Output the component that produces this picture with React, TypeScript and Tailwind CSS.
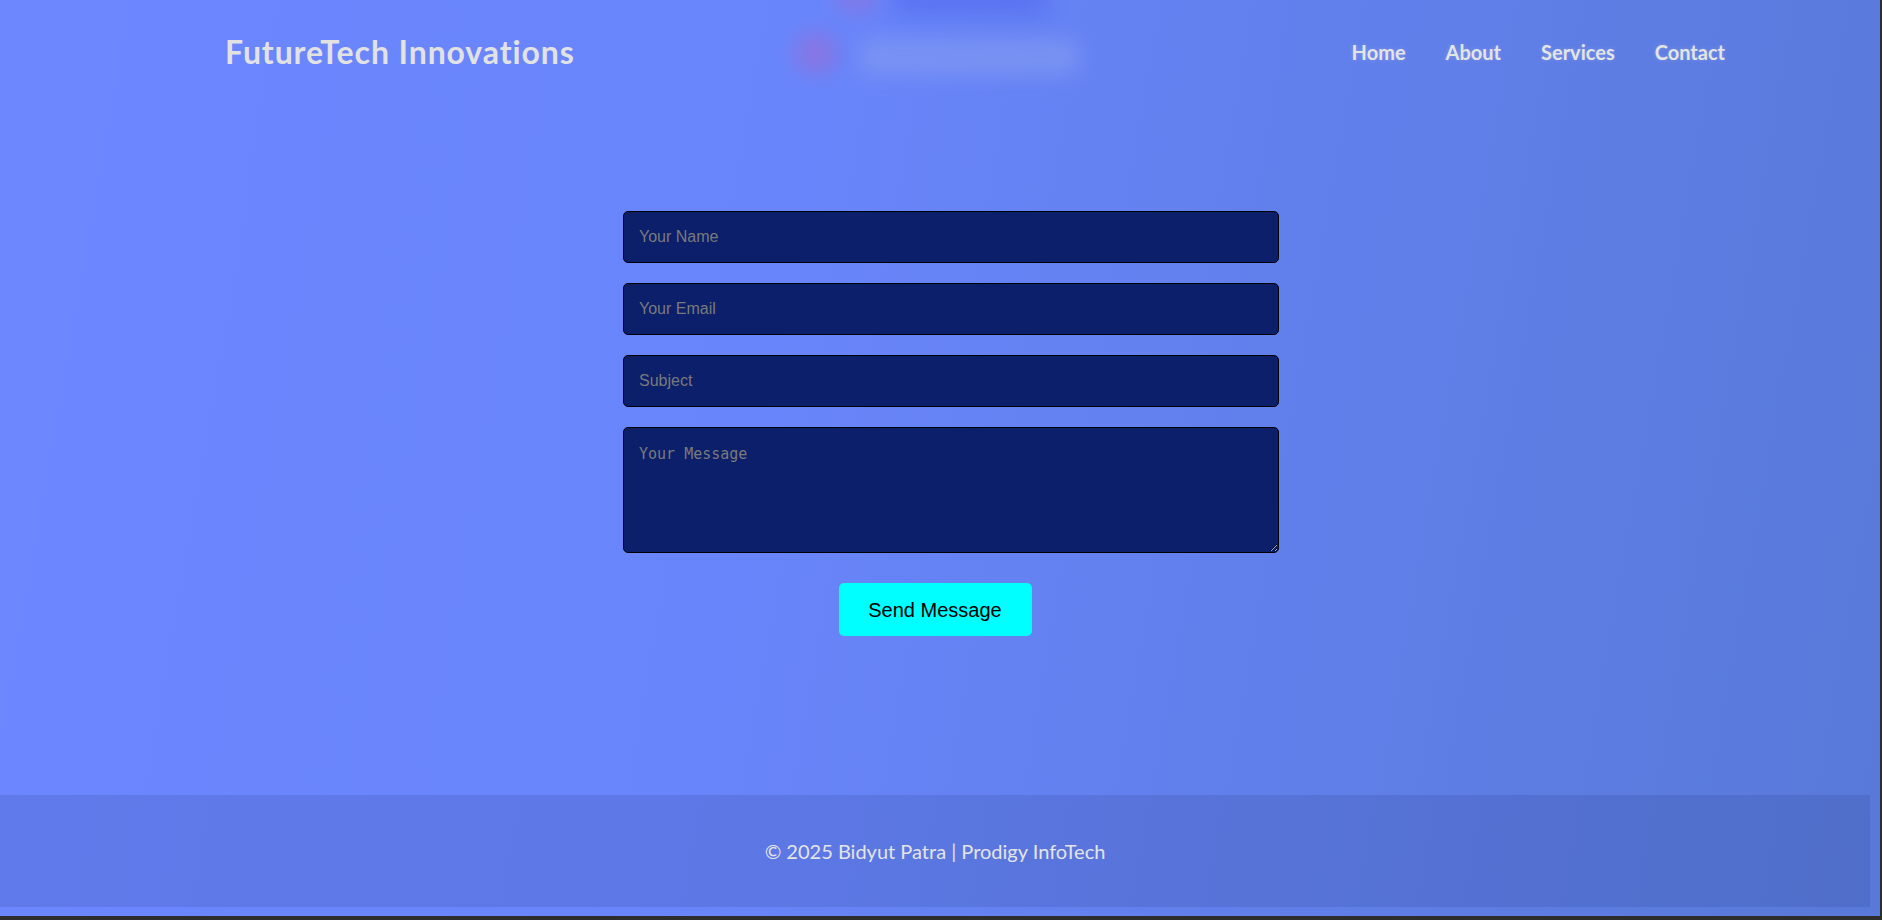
import React from "react";

export default function App() {
  return (
    <div className="w-[1882px] h-[920px] bg-[#2d2d2d] overflow-hidden">
      <div className="relative w-[1880px] h-[916px] overflow-hidden bg-[linear-gradient(100deg,#6c87ff_0%,#6985fb_40%,#5f7ee6_75%,#5879d9_100%)]">
        {/* blurred decorative blobs */}
        <div className="pointer-events-none absolute left-[795px] top-[32px] w-[42px] h-[42px] rounded-full bg-[#a06ad0] opacity-55 blur-[10px]" />
        <div className="pointer-events-none absolute left-[835px] top-[-18px] w-[44px] h-[30px] rounded-full bg-[#a06ad0] opacity-45 blur-[10px]" />
        <div className="pointer-events-none absolute left-[890px] top-[-16px] w-[160px] h-[30px] rounded-full bg-[#4f66ee] opacity-60 blur-[12px]" />
        <div className="pointer-events-none absolute left-[858px] top-[38px] w-[222px] h-[38px] rounded-[14px] bg-[#8098f2] opacity-70 blur-[10px]" />

        <div className="relative w-[1870px] flex flex-col">
          <header className="h-[104px] flex items-center">
            <h1 className="ml-[225px] text-[32px] font-bold tracking-[0.9px] text-[#e2e2e2] font-['Lato','Noto_Sans',sans-serif] leading-none">
              FutureTech Innovations
            </h1>
            <nav className="ml-auto mr-[145px] flex items-center gap-[40px] text-[20px] font-bold text-[#e4e4e4] font-['Lato','Noto_Sans',sans-serif] [text-shadow:0_0_4px_rgba(255,255,255,0.2)]">
              <a>Home</a>
              <a>About</a>
              <a>Services</a>
              <a>Contact</a>
            </nav>
          </header>

          <main className="pt-[107px] flex flex-col">
            <form className="mx-auto w-[624px] flex flex-col gap-[20px]">
              <input
                type="text"
                placeholder="Your Name"
                className="w-[656px] h-[52px] px-[15px] rounded-[5px] border border-black bg-[#0b1f6b] text-[16px] text-white placeholder:text-[#7a7a7a] font-['Liberation_Sans',Arial,sans-serif] outline-none"
              />
              <input
                type="email"
                placeholder="Your Email"
                className="w-[656px] h-[52px] px-[15px] rounded-[5px] border border-black bg-[#0b1f6b] text-[16px] text-white placeholder:text-[#7a7a7a] font-['Liberation_Sans',Arial,sans-serif] outline-none"
              />
              <input
                type="text"
                placeholder="Subject"
                className="w-[656px] h-[52px] px-[15px] rounded-[5px] border border-black bg-[#0b1f6b] text-[16px] text-white placeholder:text-[#7a7a7a] font-['Liberation_Sans',Arial,sans-serif] outline-none"
              />
              <textarea
                placeholder="Your Message"
                className="w-[656px] h-[126px] p-[15px] rounded-[5px] border border-black bg-[#0b1f6b] text-[15px] text-white placeholder:text-[#7a7a7a] font-['DejaVu_Sans_Mono',monospace] outline-none"
              />
            </form>
            <div className="flex justify-center mt-[30px]">
              <button className="w-[193px] h-[53px] rounded-[5px] bg-[#00ffff] text-black text-[20px] font-['Liberation_Sans',Arial,sans-serif]">
                Send Message
              </button>
            </div>
          </main>

          <footer className="mt-[159px] h-[112px] w-[1870px] bg-[rgba(20,30,90,0.12)] flex items-center justify-center">
            <p className="text-[20px] text-[#e4e4e4] font-['Lato','Noto_Sans',sans-serif]">
              © 2025 Bidyut Patra | Prodigy InfoTech
            </p>
          </footer>
        </div>
      </div>
    </div>
  );
}
